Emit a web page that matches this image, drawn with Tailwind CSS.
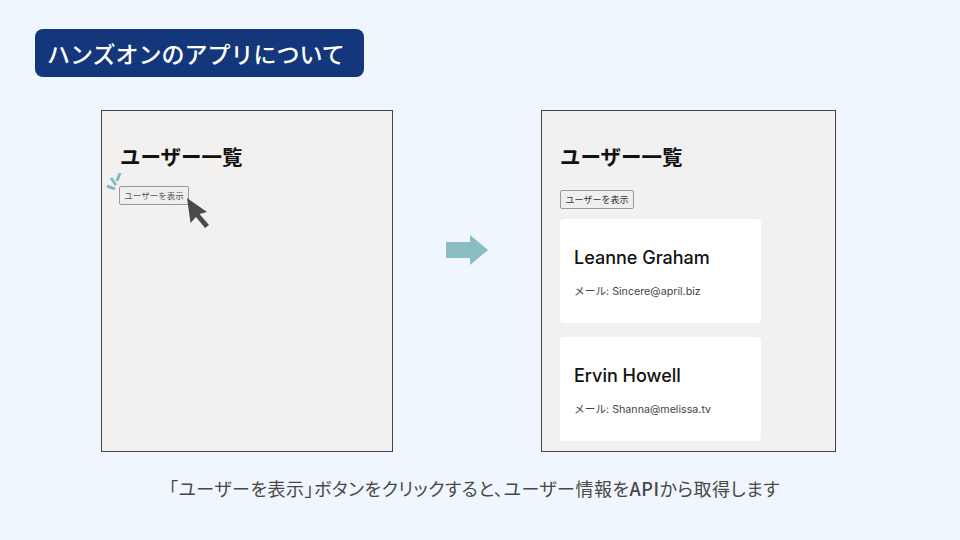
<!DOCTYPE html>
<html lang="ja">
<head>
  <meta charset="UTF-8" />
  <title>ハンズオンのアプリについて</title>
  <script src="https://cdn.jsdelivr.net/npm/@tailwindcss/browser@4"></script>
</head>
<body class="w-[960px] h-[540px] overflow-hidden bg-[#eff6fe] font-['Noto_Sans_CJK_JP','Noto_Sans',sans-serif]">
  <div class="pt-[29px] pl-[35px]">
    <h2 class="w-[329px] h-[48px] flex items-center pl-[12px] rounded-lg bg-[#14377b] text-white text-[23px] font-medium leading-none">ハンズオンのアプリについて</h2>
  </div>

  <div class="flex items-start mt-[33px] pl-[101px]">
    <!-- before click -->
    <section class="relative w-[292px] h-[342px] border border-[#444] bg-[#f2f1f0] pt-[35px] pl-[18px]">
      <h1 class="text-[20.500px] leading-[24px] font-bold text-[#111] font-['Liberation_Sans','Noto_Sans_CJK_JP',sans-serif]">ユーザー一覧</h1>
      <button class="block mt-[16px] -ml-px w-[70px] h-[19px] border border-[#999] rounded-[2px] bg-[#efefef] text-[8.500px] leading-none text-[#555]">ユーザーを表示</button>
      <svg class="absolute left-[4px] top-[61px]" width="18" height="18" viewBox="0 0 18 18" fill="none" stroke="#7fbcc0" stroke-width="3" stroke-linecap="butt">
        <path d="M1 14 9 17" />
        <path d="M5 6 10 13" />
        <path d="M14 1 11 9" />
      </svg>
      <svg class="absolute left-[84px] top-[86px]" width="24" height="34" viewBox="0 0 24 34">
        <path d="M1 1 21 15 13.5 17 23 28 19 31 10 20 4.500 26Z" fill="#4a4a4a" />
      </svg>
    </section>

    <!-- arrow -->
    <div class="w-[148px] mt-[125px] flex justify-center">
      <svg width="42" height="30" viewBox="0 0 42 30">
        <path d="M0 7H24V0L42 15 24 30V23H0Z" fill="#89bdc1" />
      </svg>
    </div>

    <!-- after click -->
    <section class="w-[295px] h-[342px] border border-[#444] bg-[#f1f1f1] pt-[35px] pl-[18px]">
      <h1 class="text-[20.500px] leading-[24px] font-bold text-[#111] font-['Liberation_Sans','Noto_Sans_CJK_JP',sans-serif]">ユーザー一覧</h1>
      <button class="block mt-[20px] w-[74px] h-[19px] border border-[#999] rounded-[2px] bg-[#efefef] text-[9px] leading-none text-[#333]">ユーザーを表示</button>
      <div class="flex flex-col gap-[14px] mt-[10px]">
        <article class="w-[201px] h-[104px] rounded-[4px] bg-white pl-[14px] pt-[28px]">
          <h3 class="text-[18px] leading-[22px] font-medium text-[#111] font-['Inter','Noto_Sans_CJK_JP',sans-serif]">Leanne Graham</h3>
          <p class="mt-[16px] text-[10.700px] leading-[14px] text-[#444] font-['Inter','Noto_Sans_CJK_JP',sans-serif]">メール: Sincere@april.biz</p>
        </article>
        <article class="w-[201px] h-[104px] rounded-[4px] bg-white pl-[14px] pt-[28px]">
          <h3 class="text-[18px] leading-[22px] font-medium text-[#111] font-['Inter','Noto_Sans_CJK_JP',sans-serif]">Ervin Howell</h3>
          <p class="mt-[16px] text-[10.700px] leading-[14px] text-[#444] font-['Inter','Noto_Sans_CJK_JP',sans-serif]">メール: Shanna@melissa.tv</p>
        </article>
      </div>
    </section>
  </div>

  <p class="mt-[24px] pr-[11px] whitespace-nowrap text-center text-[18px] leading-[24px] tracking-[0.5px] text-[#484848] [font-feature-settings:'palt']">「ユーザーを表示」ボタンをクリックすると、ユーザー情報を<span class="font-medium">API</span>から取得します</p>
</body>
</html>
